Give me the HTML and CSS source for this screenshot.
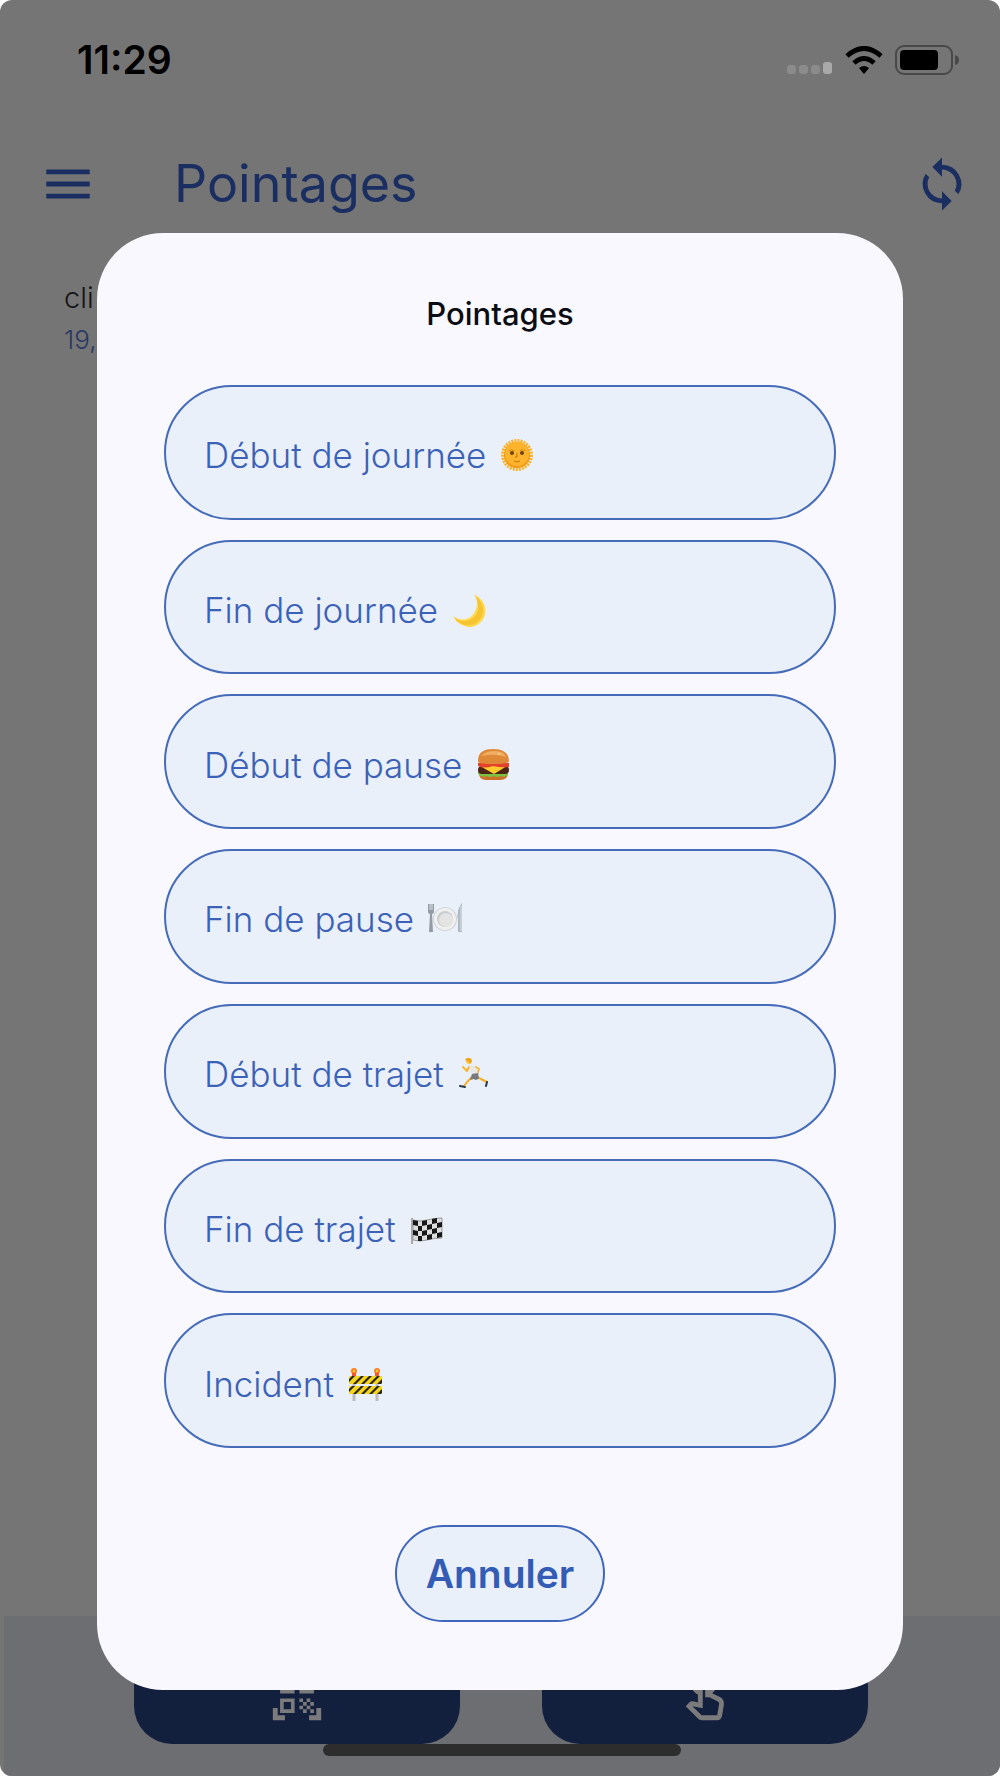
FILE: index.html
```html
<!DOCTYPE html>
<html lang="fr">
<head>
<meta charset="utf-8">
<meta name="viewport" content="width=device-width, initial-scale=1">
<title>Pointages</title>
<link rel="stylesheet" href="styles.css">
</head>
<body>
<div class="screen">
  <div class="app">
    <div class="status-bar">
      <time class="clock">11:29</time>
      <div class="indicators">
        <svg class="signal" width="46" height="14" viewBox="0 0 46 14" aria-hidden="true"><g fill="#8b8b8b"><rect y="4" width="9" height="9" rx="3"/><rect x="12" y="4" width="9" height="9" rx="3"/><rect x="24" y="4" width="9" height="9" rx="3"/></g><rect x="36" y="1" width="9" height="12" rx="3" fill="#a9a9a9"/></svg>
        <svg width="38" height="28" viewBox="0 0 38 28" aria-hidden="true"><path d="M2 10Q19-5 36 10M9 17Q19 8 29 17" fill="none" stroke="#000" stroke-width="5"/><path d="M14 22Q19 18 24 22L19 28Z"/></svg>
        <svg class="battery" width="64" height="30" viewBox="0 0 64 30" aria-hidden="true"><rect x="1" y="1" width="56" height="28" rx="8" fill="none" stroke="#484848" stroke-width="2"/><rect x="5" y="5" width="38" height="20" rx="4"/><path d="M60 10q4 1 4 5t-4 5z" fill="#484848"/></svg>
      </div>
    </div>
    <header class="app-bar">
      <button class="icon-button" type="button" aria-label="Menu"><svg width="58" height="58" viewBox="0 0 24 24"><path d="M3 18h18v-2H3v2zm0-5h18v-2H3v2zm0-7v2h18V6H3z"/></svg></button>
      <h1 class="app-title">Pointages</h1>
      <button class="icon-button" type="button" aria-label="Synchroniser"><svg width="58" height="58" viewBox="0 0 24 24"><path d="M12 4V1L8 5l4 4V6a6 6 0 0 1 5.300 8.800l1.460 1.460A8 8 0 0 0 12 4zM12 18a6 6 0 0 1-5.300-8.800L5.240 7.740A8 8 0 0 0 12 20v3l4-4-4-4z"/></svg></button>
    </header>
    <main class="entries">
      <p class="entry-name">cli</p>
      <p class="entry-date">19,</p>
    </main>
    <nav class="bottom-bar">
      <div class="bottom-actions">
        <button class="bottom-button" type="button" aria-label="Scanner"><svg width="58" height="58" viewBox="0 0 24 24"><path d="M9.500 6.500v3h-3v-3h3M11 5H5v6h6V5zm-1.500 9.500v3h-3v-3h3M11 13H5v6h6v-6zm6.500-6.500v3h-3v-3h3M19 5h-6v6h6V5zm-6 8h1.500v1.500H13V13zm1.500 1.500H16V16h-1.500v-1.500zM16 13h1.500v1.500H16V13zm-3 3h1.500v1.500H13V16zm1.500 1.500H16V19h-1.500v-1.500zM16 16h1.500v1.500H16V16zm1.500-1.500H19V16h-1.500v-1.500zm0 3H19V19h-1.500v-1.500zM22 7h-2V4h-3V2h5v5zm0 15v-5h-2v3h-3v2h5zM2 22h5v-2H4v-3H2v5zM2 2v5h2V4h3V2H2z"/></svg></button>
        <button class="bottom-button" type="button" aria-label="Pointer"><svg width="58" height="58" viewBox="0 0 24 24"><path d="M18.190 12.440l-3.240-1.620c1.290-1 2.120-2.560 2.120-4.320 0-3.030-2.470-5.500-5.500-5.500s-5.500 2.470-5.500 5.500c0 2.130 1.220 3.980 3 4.890v3.260c-2.150-.46-2.020-.44-2.260-.44-.53 0-1.030.21-1.410.59L4 16.220l5.090 5.090c.43.44 1.030.69 1.650.69h6.300c.98 0 1.810-.7 1.970-1.670l.8-4.710c.22-1.300-.43-2.580-1.620-3.180zm-.35 2.850l-.8 4.710h-6.300c-.09 0-.17-.04-.24-.1l-3.680-3.680 4.250.89V6.500c0-.28.22-.5.5-.5s.5.22.5.5v6h1.760l3.460 1.730c.4.2.62.63.55 1.060zM8.070 6.500c0-1.930 1.570-3.500 3.500-3.500s3.500 1.570 3.500 3.500c0 .95-.38 1.810-1 2.440V6.500c0-1.380-1.120-2.500-2.500-2.500s-2.500 1.120-2.500 2.500v2.440c-.62-.63-1-1.490-1-2.440z"/></svg></button>
      </div>
      <div class="home-indicator"></div>
    </nav>
  </div>

  <div class="overlay">
    <section class="modal" role="dialog" aria-modal="true" aria-labelledby="modal-title">
      <h2 class="modal-title" id="modal-title">Pointages</h2>
      <div class="choices">
        <button class="choice" type="button">Début de journée
          <svg class="emoji" viewBox="0 0 34 34" aria-hidden="true"><circle cx="17" cy="17" r="14" fill="none" stroke="#f7b32b" stroke-width="4" stroke-dasharray="2 1"/><circle cx="17" cy="17" r="13" fill="#f09a16"/><circle cx="17" cy="16" r="12" fill="#fdb42c"/><path d="M9 13q3-3 5 0M20 13q2-3 5 0" fill="none" stroke="#d8860b"/><circle cx="12" cy="15" r="2" fill="#6b4512"/><circle cx="22" cy="15" r="2" fill="#6b4512"/><path d="M17 15v4h-2M14 23q3 2 6 0" fill="none" stroke="#c87508" stroke-width="1"/></svg></button>
        <button class="choice" type="button">Fin de journée
          <svg class="emoji" viewBox="0 0 34 34" aria-hidden="true"><path d="M22 1C37 9 37 27 23 33C14 36 5 31 1 23C9 29 18 27 22 20C26 13 26 7 22 1Z" fill="#ffd84a"/><path d="M23 3C30 14 25 28 11 28C7 28 4 26 2 24C5 31 15 34 22 31C34 26 34 10 23 3Z" fill="#f6c431"/><path d="M24 5C29 16 24 26 13 27C25 25 28 15 24 5Z" fill="#ffe995"/></svg></button>
        <button class="choice" type="button">Début de pause
          <svg class="emoji" viewBox="0 0 34 34" aria-hidden="true"><path d="M3 25h29q0 7-8 7H10q-7 0-7-7z" fill="#cd7028"/><path d="M2 23q15 5 30 0v4q-4 3-7 1-4 2-7 0-4 2-7 0-5 2-9-2z" fill="#7bc143"/><rect x="2" y="18" width="31" height="8" rx="4" fill="#4d2414"/><path d="M4 18h27L18 26Z" fill="#ffca2e"/><path d="M2 15q15-3 31 0v4q-8 1-16-1-9 3-15 0z" fill="#e5422c"/><path d="M2 13C2 4 8 1 17 1s16 3 16 12q0 3-16 3T2 13z" fill="#df8938"/><path d="M5 8q5-5 14-5 9 0 11 6-10-4-25-1z" fill="#f2ae60"/><path d="M22 6h2" stroke="#fff0be"/></svg></button>
        <button class="choice" type="button">Fin de pause
          <svg class="emoji" viewBox="0 0 34 34" aria-hidden="true"><circle cx="17" cy="17" r="12" fill="#d1d3d6"/><circle cx="17" cy="17" r="11" fill="#f0f0f0"/><circle cx="17" cy="17" r="8" fill="#cbcccd"/><circle cx="18" cy="18" r="7" fill="#e4e4e4"/><path d="M0 2h6v7q0 3-2 3l1 18H1l1-18q-2 0-2-3z" fill="#939ba4"/><path d="M2 2v6m2-6v6" stroke="#dce3e8"/><path d="M34 1q-6 7-4 18v11h4z" fill="#aeb9c1"/><path d="M33 4v25" stroke="#dde6ec"/></svg></button>
        <button class="choice" type="button">Début de trajet
          <svg class="emoji" viewBox="0 0 34 34" aria-hidden="true"><g fill="none" stroke-linecap="round" stroke-linejoin="round"><path d="M11 10L9 14l-4-4M18 10l3 2-2 6" stroke="#f6b52f" stroke-width="2"/><path d="M14 20l-4 4-4 5M18 19l5 3 6 3" stroke="#f6ad24" stroke-width="2"/><path d="M2 29l5 1M29 25l-1 4" stroke="#253750" stroke-width="2"/></g><path d="M11 8l6 1 3 8-6 2z" fill="#e7e7e7"/><path d="M14 17l6-1 1 6-4 1-1-1-4 1z" fill="#777b80"/><circle cx="11" cy="4" r="3" fill="#ffc83d"/><path d="M7 3q2-4 6-1 2 2-1 5-1-3-5-4z" fill="#eea520"/></svg></button>
        <button class="choice" type="button">Fin de trajet
          <svg class="emoji" viewBox="0 0 34 34" aria-hidden="true"><path d="M2 6v26" stroke="#aaa" stroke-width="2"/><path d="M3 8q7 2 14 0t15-2v20q-8 0-15 2t-14 0z" fill="#ddd" stroke="#999"/><g fill="#181818"><path d="M3 8l5 1v5l-5-1zM12 9l5-1v5l-5 1zM22 7l5-1v5l-5 1zM8 14h4v5H8zM17 13l5-1v5l-5 1zM27 11l5-1v5l-5 1zM3 18l5 1v5l-5-1zM12 19l5-1v5l-5 1zM22 17l5-1v5l-5 1zM8 24h4v5H8zM17 23l5-1v5l-5 1zM27 21l5-1v5l-5 1z"/></g></svg></button>
        <button class="choice" type="button">Incident
          <svg class="emoji" viewBox="0 0 34 34" aria-hidden="true"><path d="M6 8v26M29 8v26" stroke="#bbb" stroke-width="3"/><circle cx="6" cy="4" r="3" fill="#ff801f"/><circle cx="29" cy="4" r="3" fill="#ff801f"/><circle cx="6" cy="4" r="1" fill="#ffe34d"/><circle cx="29" cy="4" r="1" fill="#ffe34d"/><path d="M4 6h4v3H4zM27 6h4v3h-4z" fill="#f35b26"/><rect x="1" y="9" width="33" height="8" rx="1" fill="#f4d51e"/><rect x="1" y="19" width="33" height="8" rx="1" fill="#f4d51e"/><path d="M1 15V12l3-3h3l-6 6zM5 17l8-8h3l-8 8zM13 17l8-8h3l-8 8zM21 17l8-8h3l-8 8zM29 17l5-5v4l-1 1zM1 25v-3l3-3h3l-6 6zM5 27l8-8h3l-8 8zM13 27l8-8h3l-8 8zM21 27l8-8h3l-8 8zM29 27l5-5v4l-1 1z" fill="#27231a"/></svg></button>
      </div>
      <button class="cancel" type="button">Annuler</button>
    </section>
  </div>
</div>
</body>
</html>
```
FILE: styles.css
```css
* {
  box-sizing: border-box;
}

body {
  margin: 0;
  background: #fff;
  font-family: Inter, "Liberation Sans", sans-serif;
}

h1,
h2,
p {
  margin: 0;
}

button {
  font-family: inherit;
  cursor: pointer;
}

svg {
  display: block;
  flex: none;
}

.screen {
  display: grid;
  min-height: calc(100vh - 2px);
  margin-bottom: 2px;
  border-radius: 12px;
  overflow: hidden;
  background: #757575;
}

.app,
.overlay {
  grid-area: 1 / 1;
}

.app {
  display: flex;
  flex-direction: column;
}

.status-bar {
  display: flex;
  align-items: center;
  justify-content: space-between;
  height: 120px;
  padding: 0 41px 0 77px;
}

.clock {
  font-size: 39px;
  line-height: 48px;
  font-weight: 600;
}

.indicators {
  display: flex;
  align-items: center;
  gap: 12px;
}

.signal {
  align-self: flex-end;
}

.app-bar {
  display: flex;
  align-items: center;
  height: 128px;
  padding: 0 29px 0 39px;
  color: #1a2e61;
}

.icon-button {
  padding: 0;
  border: 0;
  background: none;
  color: inherit;
}

.icon-button svg,
.bottom-button svg {
  fill: currentColor;
}

.app-title {
  flex: 1;
  padding-left: 77px;
  font-size: 52px;
  line-height: 64px;
  font-weight: 400;
}

.entries {
  flex: 1;
  padding: 30px 64px;
}

.entry-name {
  color: #161616;
  font-size: 29px;
  line-height: 40px;
  font-weight: 300;
}

.entry-date {
  color: #2a3963;
  font-size: 26px;
  line-height: 44px;
  font-weight: 300;
}

.bottom-bar {
  display: flex;
  flex-direction: column;
  margin-left: 4px;
  padding: 32px 0 20px;
  background: #6d6e72;
}

.bottom-actions {
  display: flex;
  gap: 82px;
  padding: 0 132px 0 130px;
}

.bottom-button {
  display: flex;
  flex: 1;
  align-items: center;
  justify-content: center;
  height: 96px;
  padding: 0;
  border: 0;
  border-radius: 38px;
  background: #121f3d;
  color: #7b7b7b;
}

.home-indicator {
  width: 36%;
  height: 12px;
  margin: 0 auto;
  border-radius: 6px;
  background: #2d2d2d;
}

.overlay {
  display: flex;
  align-items: flex-start;
  padding: 233px 97px 86px;
}

.modal {
  display: flex;
  flex: 1;
  flex-direction: column;
  align-items: center;
  padding: 60px 67px 68px;
  border-radius: 66px;
  background: #f9f8fe;
}

.modal-title {
  color: #0b0d14;
  font-size: 31px;
  line-height: 42px;
  font-weight: 500;
}

.choices {
  display: grid;
  grid-auto-rows: 1fr;
  gap: 20px;
  width: 100%;
  min-height: 1063px;
  margin: 50px 0 77px;
}

.choice {
  display: flex;
  align-items: center;
  gap: 14px;
  padding: 6px 38px 0;
  border: 2px solid #456bb9;
  border-radius: 68px;
  background: #eaf0fa;
  color: #3c62b7;
  font-size: 35px;
  line-height: 40px;
  font-weight: 300;
  text-align: left;
}

.emoji {
  width: 34px;
  height: 34px;
}

.cancel {
  height: 97px;
  padding: 0 29px;
  border: 2px solid #3f66ba;
  border-radius: 49px;
  background: #eaf0fa;
  color: #345cb5;
  font-size: 39px;
  line-height: 48px;
  font-weight: 600;
}
```
